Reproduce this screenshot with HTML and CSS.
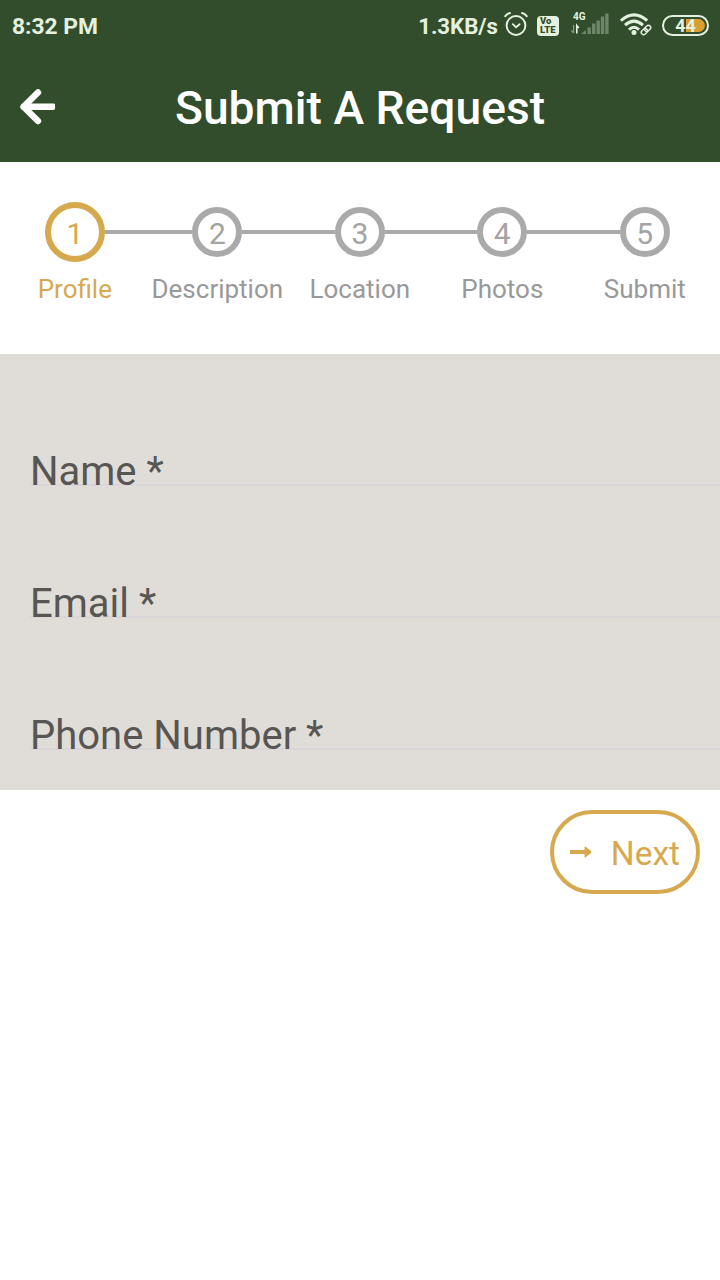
FILE: index.html
```html
<!DOCTYPE html>
<html lang="en">
  <head>
    <meta charset="UTF-8" />
    <meta name="viewport" content="width=device-width, initial-scale=1.0" />
    <title>Submit A Request</title>
    <link rel="stylesheet" href="styles.css">
  </head>
  <body>
    <header class="app-header">
      <div class="status-bar">
        <span class="status-time">8:32 PM</span>
        <div class="status-icons">
          <span class="status-speed">1.3KB/s</span>
          <svg class="icon-alarm" width="24" height="26" viewBox="0 0 24 26" fill="none" stroke="#e4f0e0" stroke-linecap="round">
            <circle cx="12" cy="14.5" r="9.4" stroke-width="2" />
            <path d="M8.8 13.2l3.2 3 3.6-3" stroke-width="1.8" />
            <path d="M1.3 5.2Q3 2.8 6 2M22.7 5.2Q21 2.8 18 2" stroke-width="2" />
          </svg>
          <div class="icon-volte"><span>Vo</span><span>LTE</span></div>
          <div class="signal">
            <span class="signal-type">4G</span>
            <svg width="38" height="24" viewBox="0 0 38 24">
              <path d="M2.6 13v8M.5 18.5l2.1 2.5" stroke="#829a7e" stroke-width="1.3" fill="none" />
              <path d="M5.8 21.5v-8l2 2.5" stroke="#e4f0e0" stroke-width="1.6" fill="none" />
              <g fill="#6d8768">
                <path d="M10 22l5-4v4z" />
                <rect x="16.5" y="15.5" width="3.4" height="6.5" />
                <rect x="21" y="11.5" width="3.4" height="10.5" />
                <rect x="25.5" y="8.5" width="3.4" height="13.5" />
                <rect x="29.8" y="4.5" width="3.4" height="17.5" />
                <rect x="34.2" y="1.5" width="3.4" height="20.5" />
              </g>
            </svg>
          </div>
          <svg class="icon-wifi" width="33" height="24" viewBox="0 0 33 24" fill="none">
            <g stroke="#e4f0e0" stroke-width="3">
              <path d="M.8 7.7Q14-3.9 27.2 7.7" />
              <path d="M5 12.2Q14 4 23 12.2" />
              <path d="M9 16.6Q14 12 19 16.6" />
            </g>
            <circle cx="14" cy="19.5" r="2.5" fill="#e4f0e0" />
            <g transform="rotate(-45 26 17)" stroke="#e4f0e0" stroke-width="1.4">
              <rect x="20.3" y="14.7" width="6.8" height="4.6" rx="2.3" />
              <rect x="24.9" y="14.7" width="6.8" height="4.6" rx="2.3" />
            </g>
          </svg>
          <div class="battery"><span>44</span></div>
        </div>
      </div>
      <div class="title-bar">
        <svg class="back-icon" width="36" height="36" viewBox="0 0 36 36" fill="none" stroke="#fff" stroke-width="6.4" stroke-linecap="round" stroke-linejoin="round">
          <path d="M18 3.5L3.5 17.800 18 32" />
          <path d="M4 17.8h28" />
          <path d="M33.6 16v3.600" stroke-width="2.8" />
        </svg>
        <h1>Submit A Request</h1>
      </div>
    </header>

    <main>
      <ol class="steps">
        <li class="step active">
          <div class="step-track"><span class="step-circle">1</span></div>
          <span class="step-label">Profile</span>
        </li>
        <li class="step">
          <div class="step-track"><span class="step-circle">2</span></div>
          <span class="step-label">Description</span>
        </li>
        <li class="step">
          <div class="step-track"><span class="step-circle">3</span></div>
          <span class="step-label">Location</span>
        </li>
        <li class="step">
          <div class="step-track"><span class="step-circle">4</span></div>
          <span class="step-label">Photos</span>
        </li>
        <li class="step">
          <div class="step-track"><span class="step-circle">5</span></div>
          <span class="step-label">Submit</span>
        </li>
      </ol>

      <form class="profile-form">
        <div class="field"><label>Name *</label></div>
        <div class="field"><label>Email *</label></div>
        <div class="field"><label>Phone Number *</label></div>
      </form>

      <div class="actions">
        <button type="button" class="next-button">
          <svg width="22" height="12" viewBox="0 0 22 12" fill="#d7a94f">
            <path d="M.5 4H14.5V1.2q0-1.2 1.2-.5L21 5q1 1 0 2l-5.3 4.300q-1.200.7-1.200-.5V8H.5Q0 8 0 7.500v-3Q0 4 .5 4z" />
          </svg>
          <span>Next</span>
        </button>
      </div>
    </main>
  </body>
</html>
```
FILE: styles.css
```css
* {
  box-sizing: border-box;
}

body {
  margin: 0;
  font-family: Roboto, sans-serif;
  background-color: #fff;
}

.app-header {
  height: 162px;
  background-color: #324d2b;
  color: #fff;
}

/* Status bar */
.status-bar {
  display: flex;
  justify-content: space-between;
  align-items: center;
  height: 52px;
  padding: 0 12px;
  color: #e4f0e0;
  font-weight: 700;
}

.status-icons {
  display: flex;
  align-items: center;
}

.status-speed {
  padding-bottom: 1px;
  font-size: 22.2px;
}

.status-time {
  padding-top: 1px;
  font-size: 22.8px;
}

.icon-alarm {
  margin: 0 9px 4px 6px;
}

.icon-volte {
  display: flex;
  flex-direction: column;
  justify-content: center;
  width: 22px;
  height: 20px;
  margin-bottom: 1px;
  padding-left: 3px;
  border-radius: 4px;
  background-color: #e4f0e0;
  color: #324d2b;
  font-size: 9.5px;
  font-weight: 900;
  line-height: 8.5px;
}

.signal {
  position: relative;
  width: 38px;
  height: 24px;
  margin: 0 11px 4px 12px;
}

.signal svg,
.icon-wifi {
  display: block;
}

.signal-type {
  position: absolute;
  top: 0;
  left: 2px;
  font-size: 10px;
  line-height: 10px;
}

.icon-wifi {
  margin: 0 9px 2px 0;
}

.battery {
  display: flex;
  justify-content: center;
  align-items: center;
  width: 47px;
  height: 21px;
  margin: 0 -1px 2px 0;
  border: 2px solid #e4f0e0;
  border-radius: 11px;
  padding: 2px;
  font-size: 18px;
}

.battery span {
  width: 100%;
  height: 13px;
  border-radius: 7px;
  background: linear-gradient(to right, transparent 52%, #d99e32 52%);
  line-height: 13px;
  text-align: center;
}

/* Title bar */
.title-bar {
  display: grid;
  grid-template-columns: 36px 1fr 36px;
  align-items: center;
  height: 110px;
  padding: 0 20px;
}

.title-bar h1 {
  margin: 0;
  padding-top: 2px;
  font-size: 46.2px;
  font-weight: 500;
  text-align: center;
}

/* Steps */
.steps {
  display: flex;
  height: 192px;
  margin: 0;
  padding: 40px 4px 0 3.6px;
  list-style: none;
}

.step {
  flex: 1 1 0;
  display: flex;
  flex-direction: column;
  align-items: center;
  color: #999;
}

.step-track {
  display: flex;
  align-items: center;
  width: 100%;
  height: 60px;
}

.step-track::before,
.step-track::after {
  content: "";
  flex: 1;
  height: 4px;
  background-color: #aaa;
}

.step:first-child .step-track::before,
.step:last-child .step-track::after {
  background-color: transparent;
}

.step-circle {
  display: flex;
  justify-content: center;
  align-items: center;
  width: 50px;
  height: 50px;
  padding-top: 3px;
  border: 6px solid #aaa;
  border-radius: 50%;
  color: #a3a3a3;
  font-size: 30px;
}

.step-label {
  margin-top: 12px;
  font-size: 26px;
  line-height: 30px;
}

.step.active {
  color: #d7a94f;
}

.step.active .step-circle {
  width: 60px;
  height: 60px;
  border-color: #d7a94f;
  color: #d7a94f;
}

/* Form */
.profile-form {
  height: 436px;
  padding-left: 30px;
  background-color: #e0ddd8;
}

.field {
  display: flex;
  align-items: flex-end;
  height: 132px;
  border-bottom: 2px solid #d9d5d9;
}

.field label {
  color: #575653;
  font-size: 40px;
  line-height: 24px;
}

.actions {
  display: flex;
  justify-content: flex-end;
  padding: 20px;
}

.next-button {
  display: flex;
  align-items: center;
  justify-content: space-between;
  width: 150px;
  height: 84px;
  padding: 0 16px;
  border: 4px solid #d7a94f;
  border-radius: 42px;
  background-color: #fff;
  color: #d7a94f;
  font-family: inherit;
  font-size: 33.5px;
}

.next-button span {
  padding-top: 3px;
}
```
